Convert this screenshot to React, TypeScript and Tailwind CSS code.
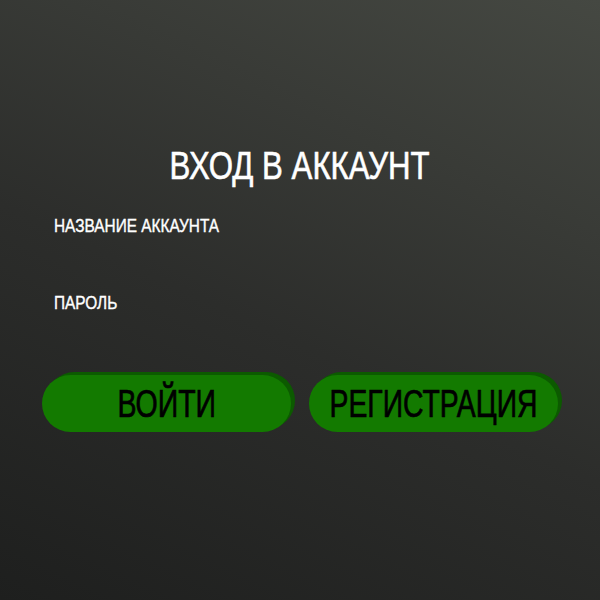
export default function App() {
  return (
    <div className="w-full h-[600px] bg-[linear-gradient(205deg,#454842_0%,#2c2d2b_55%,#1e1f1e_100%)] flex flex-col font-['Liberation_Sans',Arial,sans-serif]">
      <div className="pt-[142px] px-[42px] flex flex-col">
        <h1 className="text-center text-white text-[39px] leading-[48px] [-webkit-text-stroke:0.6px_white]">
          <span className="inline-block scale-x-[0.8]">ВХОД В АККАУНТ</span>
        </h1>
        <form className="mt-[25px] flex flex-col pl-[12px]">
          <label className="text-white text-[19px] leading-[22px] [-webkit-text-stroke:0.4px_white]">
            <span className="inline-block origin-left scale-x-[0.81]">НАЗВАНИЕ АККАУНТА</span>
          </label>
          <input type="text" className="h-[55px] bg-transparent outline-none text-white" />
          <label className="text-white text-[19px] leading-[22px] [-webkit-text-stroke:0.4px_white]">
            <span className="inline-block origin-left scale-x-[0.81]">ПАРОЛЬ</span>
          </label>
          <input type="password" className="h-[54px] bg-transparent outline-none text-white" />
        </form>
        <div className="mt-[7px] grid grid-cols-2 gap-[18px]">
          <button className="h-[57px] rounded-full bg-[#137a00] shadow-[4px_-3px_0_#0c5a00] text-black text-[38px] leading-none flex items-center justify-center whitespace-nowrap [-webkit-text-stroke:0.7px_black]">
            <span className="inline-block scale-x-[0.75]">ВОЙТИ</span>
          </button>
          <button className="h-[57px] rounded-full bg-[#137a00] shadow-[4px_-3px_0_#0c5a00] text-black text-[38px] leading-none flex items-center justify-center whitespace-nowrap [-webkit-text-stroke:0.7px_black]">
            <span className="inline-block scale-x-[0.745]">РЕГИСТРАЦИЯ</span>
          </button>
        </div>
      </div>
    </div>
  )
}
